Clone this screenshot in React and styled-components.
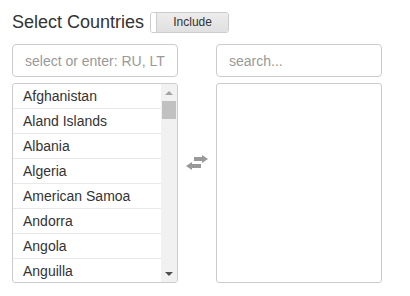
import styled, { createGlobalStyle } from "styled-components";

const GlobalStyle = createGlobalStyle`
  body {
    margin: 0;
    background: #fff;
    font-family: "Liberation Sans", Arial, sans-serif;
    color: #333;
  }
`;

const countries = [
  "Afghanistan",
  "Aland Islands",
  "Albania",
  "Algeria",
  "American Samoa",
  "Andorra",
  "Angola",
  "Anguilla",
];

const StyledPage = styled.div`
  padding: 11px 12px 0;
`;

const StyledHeader = styled.div`
  display: flex;
  align-items: center;
  gap: 6px;
  height: 22px;
`;

const StyledTitle = styled.h3`
  margin: 0;
  font-size: 18px;
  font-weight: normal;
  line-height: 21px;
  color: #333;
`;

const StyledToggle = styled.div`
  display: flex;
  width: 79px;
  height: 21px;
  box-sizing: border-box;
  border: 1px solid #ccc;
  border-radius: 3px;
  overflow: hidden;
`;

const StyledKnob = styled.span`
  width: 5px;
  background: #fff;
  border-right: 1px solid #ccc;
`;

const StyledToggleLabel = styled.span`
  flex: 1;
  display: flex;
  align-items: center;
  justify-content: center;
  font-size: 12px;
  color: #333;
  background: linear-gradient(#ececec, #e0e0e0);
`;

const StyledColumns = styled.div`
  display: grid;
  grid-template-columns: 166px 38px 166px;
  margin-top: 11px;
`;

const StyledColumn = styled.div`
  display: flex;
  flex-direction: column;
  gap: 6px;
`;

const StyledInput = styled.input`
  box-sizing: border-box;
  width: 100%;
  height: 33px;
  padding: 0 12px;
  border: 1px solid #ccc;
  border-radius: 4px;
  font-family: "Liberation Sans", Arial, sans-serif;
  font-size: 14px;
  color: #555;
  outline: none;

  &::placeholder {
    color: #999;
  }
`;

const StyledListBox = styled.div`
  box-sizing: border-box;
  height: 200px;
  display: flex;
  border: 1px solid #ccc;
  border-radius: 3px;
  overflow: hidden;
`;

const StyledItems = styled.ul`
  flex: 1;
  margin: 0;
  padding: 0;
  list-style: none;
  overflow: hidden;
`;

const StyledItem = styled.li`
  height: 25px;
  box-sizing: border-box;
  padding: 0 10px;
  border-bottom: 1px solid #e8e8e8;
  display: flex;
  align-items: center;
  font-size: 14px;
  color: #333;
  white-space: nowrap;
`;

const StyledScrollbar = styled.div`
  width: 16px;
  display: flex;
  flex-direction: column;
  background: #f1f1f1;
`;

const StyledScrollArrow = styled.div`
  height: 17px;
  display: flex;
  align-items: center;
  justify-content: center;

  &::after {
    content: "";
    border-left: 4px solid transparent;
    border-right: 4px solid transparent;
    ${({ $down, $color }) =>
      $down
        ? `border-top: 4px solid ${$color};`
        : `border-bottom: 4px solid ${$color};`}
  }
`;

const StyledTrack = styled.div`
  flex: 1;
  padding: 0 1px;
`;

const StyledThumb = styled.div`
  height: 18px;
  background: #c1c1c1;
`;

const StyledSwap = styled.div`
  display: flex;
  justify-content: center;
  padding-top: 111px;
  color: #999;
`;

function ExchangeIcon() {
  return (
    <svg width="22" height="15" viewBox="0 0 22 15" fill="currentColor">
      <path d="M8 2H16V0L22 4L16 8V6H8Z" />
      <path d="M15 9H6V7L0 11L6 15V13H15Z" />
    </svg>
  );
}

function ListBox({ items, scroll }) {
  return (
    <StyledListBox>
      <StyledItems>
        {items.map((c) => (
          <StyledItem key={c}>{c}</StyledItem>
        ))}
      </StyledItems>
      {scroll && (
        <StyledScrollbar>
          <StyledScrollArrow $color="#a3a3a3" />
          <StyledTrack>
            <StyledThumb />
          </StyledTrack>
          <StyledScrollArrow $down $color="#505050" />
        </StyledScrollbar>
      )}
    </StyledListBox>
  );
}

export default function App() {
  return (
    <StyledPage>
      <GlobalStyle />
      <StyledHeader>
        <StyledTitle>Select Countries</StyledTitle>
        <StyledToggle>
          <StyledKnob />
          <StyledToggleLabel>Include</StyledToggleLabel>
        </StyledToggle>
      </StyledHeader>
      <StyledColumns>
        <StyledColumn>
          <StyledInput placeholder="select or enter: RU, LT" />
          <ListBox items={countries} scroll />
        </StyledColumn>
        <StyledSwap>
          <ExchangeIcon />
        </StyledSwap>
        <StyledColumn>
          <StyledInput placeholder="search..." />
          <ListBox items={[]} />
        </StyledColumn>
      </StyledColumns>
    </StyledPage>
  );
}
